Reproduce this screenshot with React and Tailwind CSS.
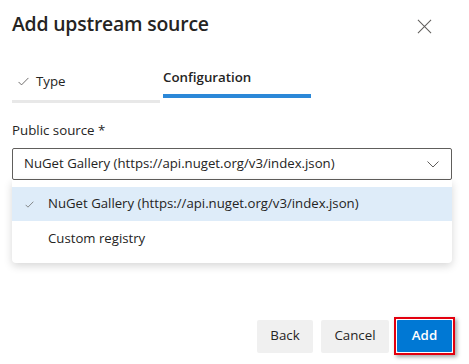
import React from 'react';

const font = { fontFamily: '"Segoe UI", "Open Sans", "Liberation Sans", sans-serif' };

function Check({ className }) {
  return (
    <svg viewBox="0 0 12 10" className={className} fill="none" stroke="currentColor" strokeWidth="1">
      <path d="M0.5 5.5 L3.8 8.8 L11.5 1" />
    </svg>
  );
}

export default function App() {
  return (
    <div className="w-[469px] h-[364px] bg-white text-[#252423] flex flex-col overflow-hidden" style={font}>
      <div className="flex items-start justify-between pl-3 pr-[37px] pt-[10px] h-[60px]">
        <h1 className="text-[19.4px] leading-[28px] font-semibold tracking-[-0.2px]">Add upstream source</h1>
        <svg viewBox="0 0 16 16" className="w-[15px] h-[15px] mt-[9px] text-[#605e5c]" fill="none" stroke="currentColor" strokeWidth="1.1">
          <path d="M1 1 L15 15 M15 1 L1 15" />
        </svg>
      </div>

      <div className="flex items-start pl-3 gap-[3px] h-[46px]">
        <div className="w-[148px] flex flex-col">
          <div className="flex items-center gap-[7px] pl-[6px] h-[36px] pt-[7px] text-[13.3px]">
            <Check className="w-[11px] h-[9px] text-[#605e5c]" />
            <span>Type</span>
          </div>
          <div className="h-[3px] mt-[4px] bg-[#e8e8e8]" />
        </div>
        <div className="w-[148px] flex flex-col">
          <div className="h-[34px] pt-[2px] flex items-center text-[13.3px] font-semibold">Configuration</div>
          <div className="h-[4px] bg-[#2b88d8]" />
        </div>
      </div>

      <div className="pl-3 pr-[17px] flex flex-col">
        <label className="text-[13.3px] leading-[20px] mt-[14px]">Public source *</label>
        <div className="mt-[8px] h-[32px] border border-[#605e5c] rounded-[2px] flex items-center justify-between pl-[11px] pr-[12px] text-[13.2px]">
          <span>NuGet Gallery (https://api.nuget.org/v3/index.json)</span>
          <svg viewBox="0 0 12 7" className="w-[12px] h-[7px] text-[#605e5c]" fill="none" stroke="currentColor" strokeWidth="1">
            <path d="M0.5 0.5 L6 6 L11.5 0.5" />
          </svg>
        </div>
        <div className="bg-white rounded-b-[4px] shadow-[0_3px_8px_rgba(0,0,0,0.16)] pt-[7px] pb-[6px] text-[13.2px]">
          <div className="h-[34px] bg-[#deecf9] flex items-center pl-[13px] gap-[14px]">
            <Check className="w-[9px] h-[7px] text-[#605e5c]" />
            <span>NuGet Gallery (https://api.nuget.org/v3/index.json)</span>
          </div>
          <div className="h-[36px] flex items-center pl-[36px]">Custom registry</div>
        </div>
      </div>

      <div className="mt-auto mb-[9px] flex justify-end items-center pr-[14px]">
        <button className="h-[33px] w-[56px] bg-[#f0f0f0] rounded-[2px] text-[13.3px]">Back</button>
        <button className="ml-[8px] h-[33px] w-[68px] bg-[#f0f0f0] rounded-[2px] text-[13.3px]">Cancel</button>
        <div className="ml-[5px] border-2 border-[#e3000f] p-[1px] shadow-[2px_2px_4px_rgba(0,0,0,0.35)]">
          <button className="h-[32px] w-[55px] bg-[#0078d4] text-white font-semibold text-[13.3px] rounded-[1px] block">Add</button>
        </div>
      </div>
    </div>
  );
}
